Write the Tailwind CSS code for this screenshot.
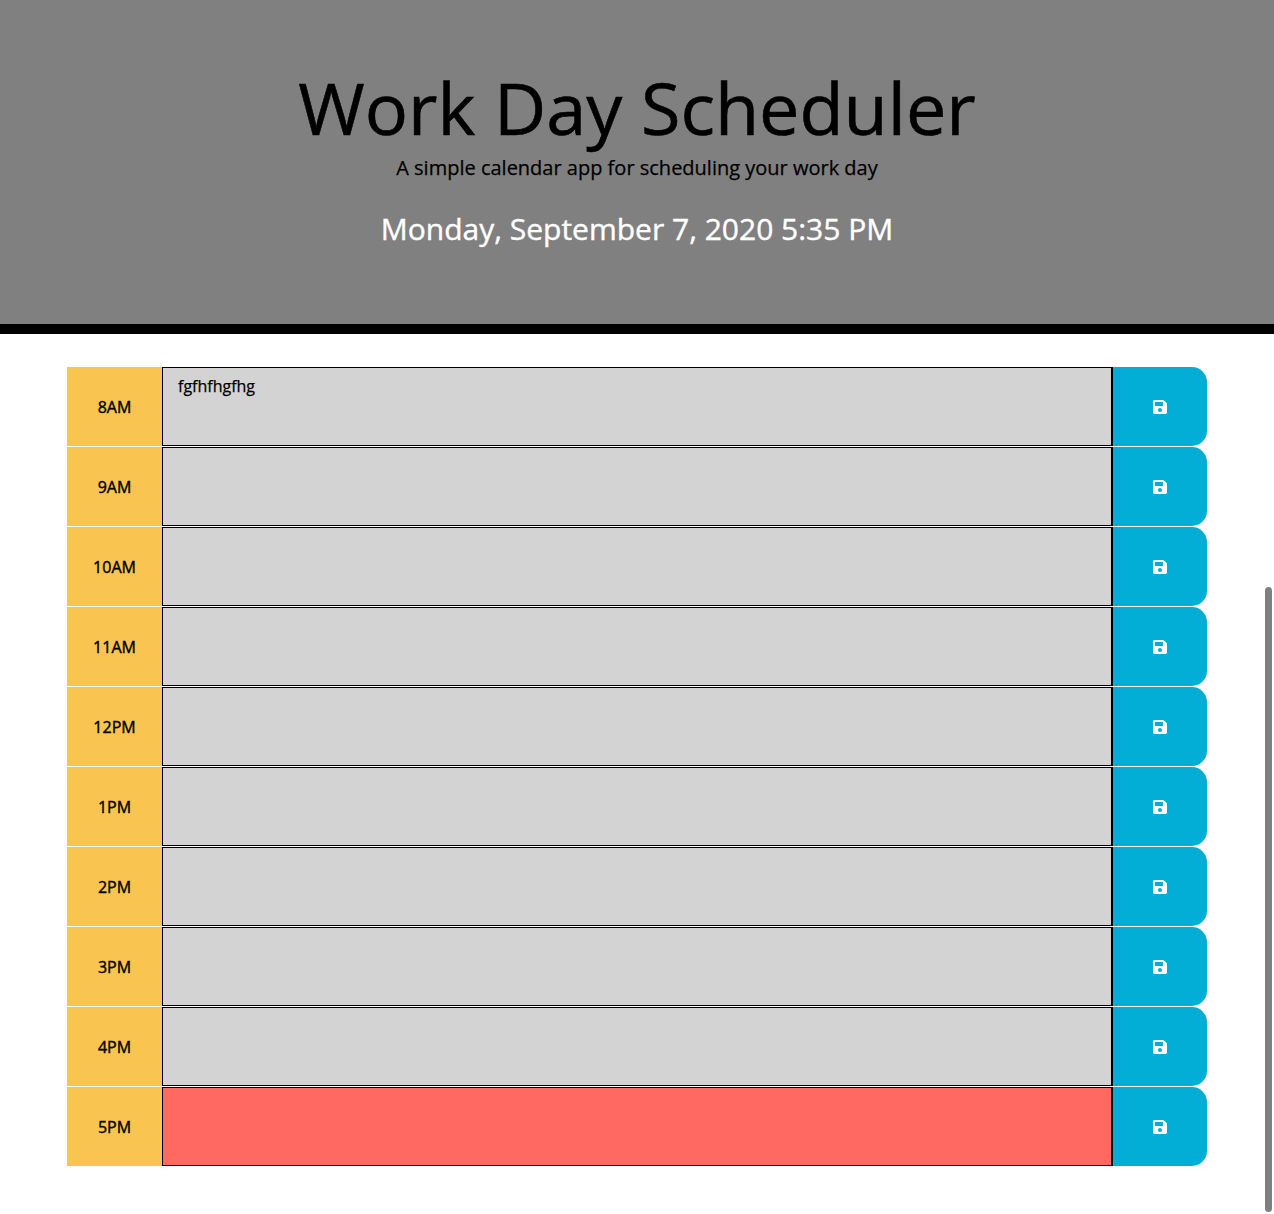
<!DOCTYPE html>
<html lang="en">
<head>
<meta charset="utf-8">
<title>Work Day Scheduler</title>
<script src="https://cdn.jsdelivr.net/npm/@tailwindcss/browser@4"></script>
</head>
<body class="bg-white text-black overflow-hidden h-[1214px] font-['Open_Sans',sans-serif] text-base [-webkit-text-stroke:0.25px_currentColor]">
<header class="h-[334px] bg-[#808080] border-b-10 border-black flex flex-col items-center pt-16 text-center">
  <h1 class="text-[72px] leading-[86px] [-webkit-text-stroke:0.6px_currentColor]">Work Day Scheduler</h1>
  <p class="text-[20px] leading-[30px] mt-[3px]">A simple calendar app for scheduling your work day</p>
  <p class="text-[30px] leading-[45px] text-white mt-[23px] [-webkit-text-stroke:0.4px_currentColor]">Monday, September 7, 2020 5:35 PM</p>
</header>
<main id="rows" class="mx-[67px] mt-[33px] flex flex-col"></main>
<div class="absolute right-[2px] top-[587px] w-[7px] h-[625px] rounded-full bg-[#7f7f7f]"></div>
<template id="row">
  <section class="flex h-20">
    <div class="hour w-[95px] h-[79px] bg-[#f9c550] flex items-center justify-center [-webkit-text-stroke:0.4px_currentColor]"></div>
    <div class="note w-[950px] h-[79px] border border-black px-[15px] pt-[6px] leading-6"></div>
    <button class="w-[95px] h-[79px] bg-[#03aed6] rounded-r-[15px] border-l border-black flex items-center justify-center text-white">
      <svg class="w-[14px] h-[14px]" viewBox="0 0 448 448" fill="currentColor"><path d="M433.941 97.941l-83.882-83.882A48 48 0 0 0 316.118 0H48C21.49 0 0 21.49 0 48v352c0 26.51 21.49 48 48 48h352c26.51 0 48-21.49 48-48V131.882a48 48 0 0 0-14.059-33.941zM224 384c-35.346 0-64-28.654-64-64 0-35.346 28.654-64 64-64s64 28.654 64 64c0 35.346-28.654 64-64 64zm96-304.52V180c0 6.627-5.373 12-12 12H76c-6.627 0-12-5.373-12-12V76c0-6.627 5.373-12 12-12h228.52c3.183 0 6.235 1.264 8.485 3.515l3.48 3.48A11.996 11.996 0 0 1 320 79.48z"/></svg>
    </button>
  </section>
</template>
<script>
const tpl = document.getElementById('row');
['8AM','9AM','10AM','11AM','12PM','1PM','2PM','3PM','4PM','5PM'].forEach(h => {
  const n = tpl.content.cloneNode(true);
  n.querySelector('.hour').textContent = h;
  const note = n.querySelector('.note');
  note.classList.add(h === '5PM' ? 'bg-[#ff6961]' : 'bg-[#d3d3d3]');
  if (h === '8AM') note.textContent = 'fgfhfhgfhg';
  document.getElementById('rows').append(n);
});
</script>
</body>
</html>
